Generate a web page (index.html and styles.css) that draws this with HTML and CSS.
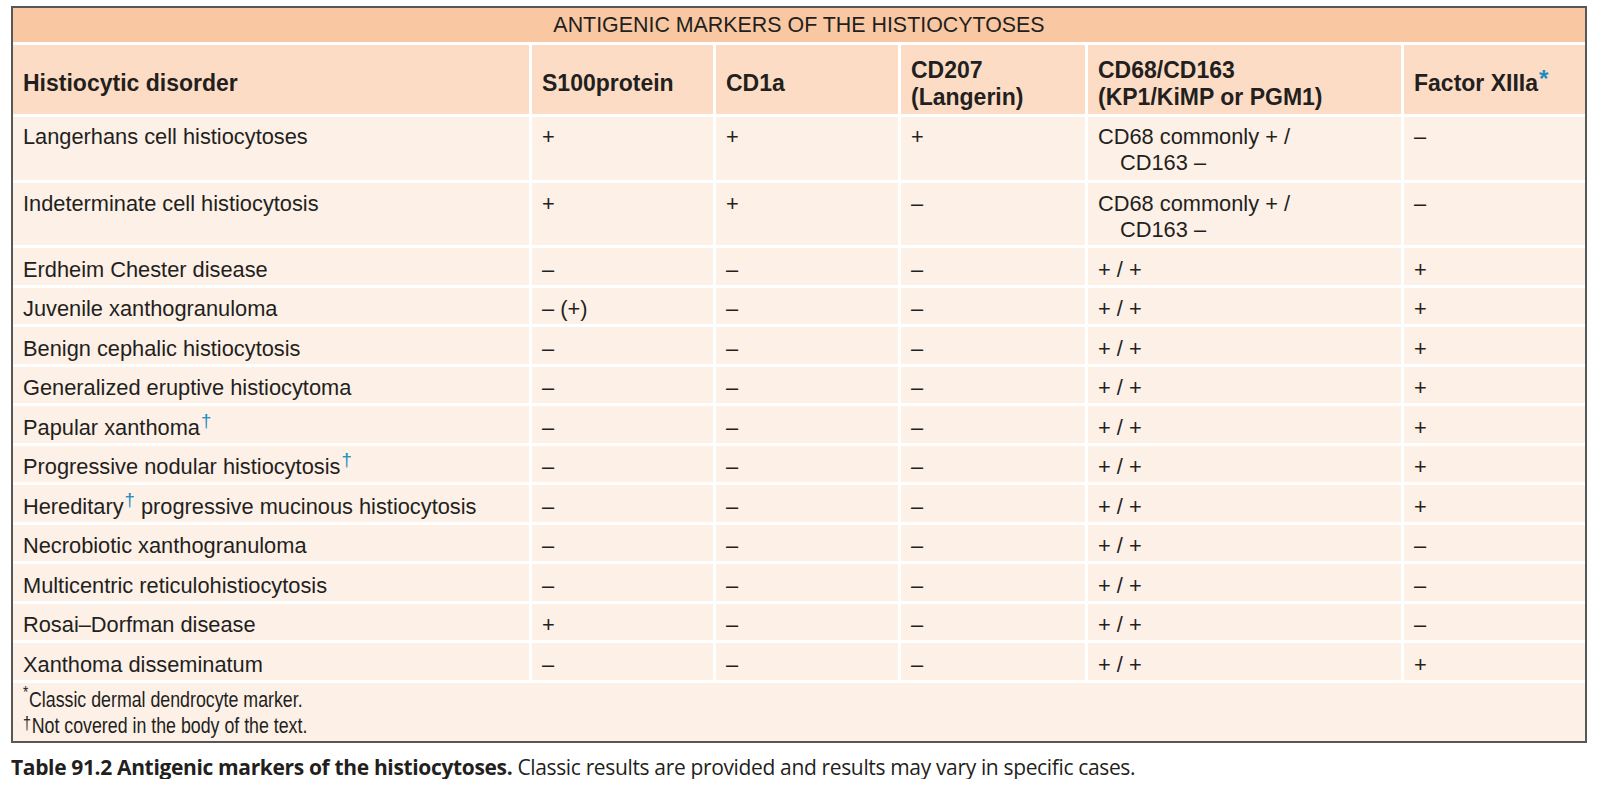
FILE: index.html
```html
<!DOCTYPE html>
<html lang="en">
<head>
<meta charset="utf-8">
<title>Antigenic markers of the histiocytoses</title>
<link rel="stylesheet" href="styles.css">
</head>
<body>
<div class="page">
  <div class="tbl">
    <div class="title">ANTIGENIC MARKERS OF THE HISTIOCYTOSES</div>
    <div class="row head">
      <div><span>Histiocytic disorder</span></div>
      <div><span>S100protein</span></div>
      <div><span>CD1a</span></div>
      <div><span>CD207<br>(Langerin)</span></div>
      <div><span>CD68/CD163<br>(KP1/KiMP or PGM1)</span></div>
      <div><span>Factor XIIIa<span class="ast">*</span></span></div>
    </div>
    <div class="row body dbl">
      <div>Langerhans cell histiocytoses</div>
      <div>+</div><div>+</div><div>+</div>
      <div class="hang">CD68 commonly + /<br>CD163 –</div>
      <div>–</div>
    </div>
    <div class="row body dbl2">
      <div>Indeterminate cell histiocytosis</div>
      <div>+</div><div>+</div><div>–</div>
      <div class="hang">CD68 commonly + /<br>CD163 –</div>
      <div>–</div>
    </div>
    <div class="row body sgl">
      <div>Erdheim Chester disease</div>
      <div>–</div><div>–</div><div>–</div><div>+ / +</div><div>+</div>
    </div>
    <div class="row body sgl">
      <div>Juvenile xanthogranuloma</div>
      <div>– (+)</div><div>–</div><div>–</div><div>+ / +</div><div>+</div>
    </div>
    <div class="row body sgl">
      <div>Benign cephalic histiocytosis</div>
      <div>–</div><div>–</div><div>–</div><div>+ / +</div><div>+</div>
    </div>
    <div class="row body sgl">
      <div>Generalized eruptive histiocytoma</div>
      <div>–</div><div>–</div><div>–</div><div>+ / +</div><div>+</div>
    </div>
    <div class="row body sgl">
      <div>Papular xanthoma<span class="dg">†</span></div>
      <div>–</div><div>–</div><div>–</div><div>+ / +</div><div>+</div>
    </div>
    <div class="row body sgl">
      <div>Progressive nodular histiocytosis<span class="dg">†</span></div>
      <div>–</div><div>–</div><div>–</div><div>+ / +</div><div>+</div>
    </div>
    <div class="row body sgl">
      <div>Hereditary<span class="dg">†</span> progressive mucinous histiocytosis</div>
      <div>–</div><div>–</div><div>–</div><div>+ / +</div><div>+</div>
    </div>
    <div class="row body sgl">
      <div>Necrobiotic xanthogranuloma</div>
      <div>–</div><div>–</div><div>–</div><div>+ / +</div><div>–</div>
    </div>
    <div class="row body sgl">
      <div>Multicentric reticulohistiocytosis</div>
      <div>–</div><div>–</div><div>–</div><div>+ / +</div><div>–</div>
    </div>
    <div class="row body sgl">
      <div>Rosai–Dorfman disease</div>
      <div>+</div><div>–</div><div>–</div><div>+ / +</div><div>–</div>
    </div>
    <div class="row body sgl">
      <div>Xanthoma disseminatum</div>
      <div>–</div><div>–</div><div>–</div><div>+ / +</div><div>+</div>
    </div>
    <div class="foot">
      <p><span class="fs">*</span>Classic dermal dendrocyte marker.</p>
      <p><span class="fd">†</span>Not covered in the body of the text.</p>
    </div>
  </div>
  <p class="caption"><b>Table 91.2 Antigenic markers of the histiocytoses.</b> Classic results are provided and results may vary in specific cases.</p>
</div>
</body>
</html>
```
FILE: styles.css
```css
* { box-sizing: border-box; }

body {
  margin: 0;
  background: #ffffff;
  color: #231f20;
  font-family: "Liberation Sans", Arial, sans-serif;
}

.page {
  padding: 6px 0 0 11px;
}

.tbl {
  width: 1576px;
  border: 2px solid #575757;
  background: #ffffff;
  display: flex;
  flex-direction: column;
  gap: 3px;
}

.title {
  height: 34px;
  background: #f9c8a3;
  display: flex;
  align-items: center;
  justify-content: center;
  font-size: 21.4px;
  padding-top: 1px;
}

.row {
  display: grid;
  grid-template-columns: 516px 181px 182px 184px 313px 181px;
  column-gap: 3px;
}

.row > div {
  padding-left: 10px;
}

.head {
  height: 69px;
}

.head > div {
  background: #fcdcc5;
  font-weight: bold;
  font-size: 23px;
  line-height: 27px;
  display: flex;
  align-items: center;
  padding-top: 8px;
}

.ast {
  color: #1a8cbf;
  font-size: 1.05em;
  font-weight: bold;
  vertical-align: 0.15em;
  line-height: 0;
  margin-left: 1px;
}

.body > div {
  background: #fdf0e7;
  font-size: 21.8px;
  line-height: 26px;
  padding-top: 8px;
  white-space: nowrap;
}

.dbl { height: 63px; }
.dbl2 { height: 62px; }
.dbl > div { padding-top: 7px; }
.sgl { height: 36.5px; }
.sgl > div { padding-top: 8.5px; }

.body > .hang {
  padding-left: 32px;
  text-indent: -22px;
}

.dg {
  color: #1a8cbf;
  font-size: 0.85em;
  vertical-align: 0.42em;
  line-height: 0;
  margin-left: 1px;
}

.foot {
  height: 58px;
  background: #fdf0e7;
  padding: 4px 0 0 10px;
}

.foot p {
  margin: 0;
  font-size: 22.5px;
  line-height: 26px;
  white-space: nowrap;
  transform: scaleX(0.79);
  transform-origin: left center;
}

.fs {
  font-size: 0.75em;
  vertical-align: 0.5em;
  line-height: 0;
  margin-right: 1px;
}

.fd {
  font-size: 0.8em;
  vertical-align: 0.2em;
  line-height: 0;
  margin-right: 1px;
}

.caption {
  margin: 12px 0 0;
  font-family: "Open Sans", "Noto Sans", sans-serif;
  font-size: 21px;
  line-height: 24px;
  letter-spacing: -0.35px;
  color: #231f20;
}

.caption b {
  font-weight: 700;
}
```
